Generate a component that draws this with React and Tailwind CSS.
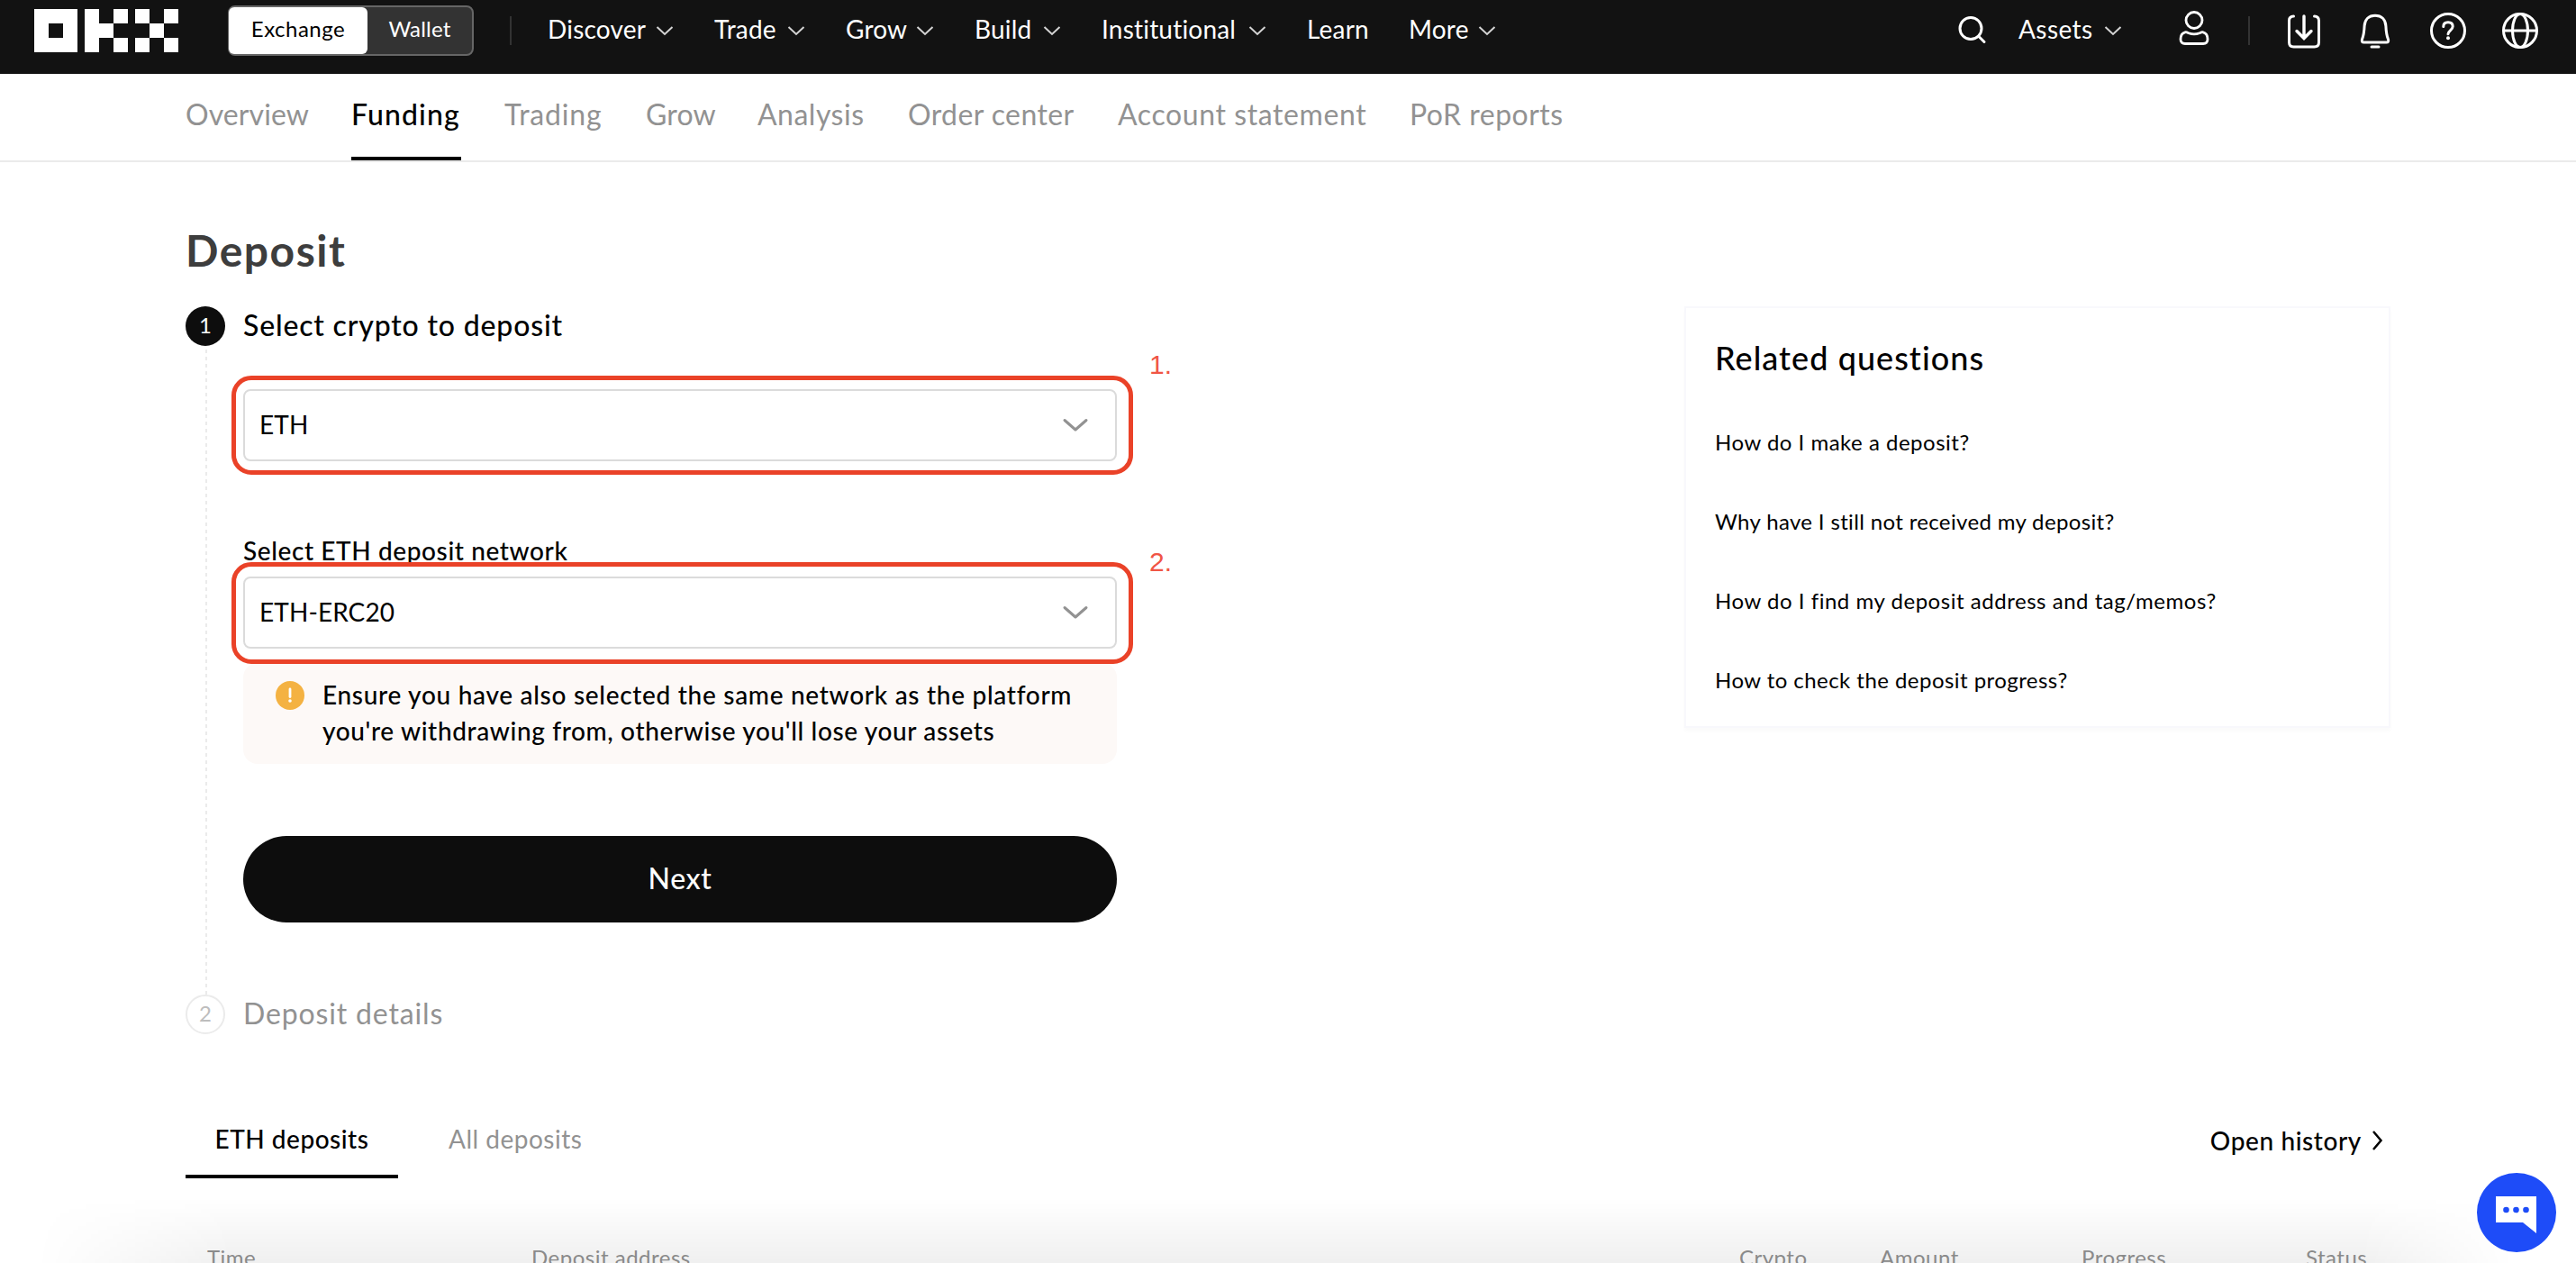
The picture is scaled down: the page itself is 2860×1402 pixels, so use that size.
const NAV_ITEMS = [
  { label: 'Discover', width: 'w-[107px]' },
  { label: 'Trade', width: 'w-[68px]' },
  { label: 'Grow', width: 'w-[65px]' },
  { label: 'Build', width: 'w-[63px]' },
  { label: 'Institutional', width: 'w-[150px]' },
  { label: 'Learn', width: 'w-[68px]', plain: true },
  { label: 'More', width: 'w-[64px]' },
]

const TABS = [
  { label: 'Overview', width: 'w-[136px]', track: 'tracking-[0.1px]' },
  { label: 'Funding', width: 'w-[122px]', track: 'tracking-[1.1px]', active: true },
  { label: 'Trading', width: 'w-[109px]', track: 'tracking-[0.8px]' },
  { label: 'Grow', width: 'w-[76px]', track: 'tracking-[0.2px]' },
  { label: 'Analysis', width: 'w-[119px]', track: 'tracking-[0.5px]' },
  { label: 'Order center', width: 'w-[185px]', track: 'tracking-[0.4px]' },
  { label: 'Account statement', width: 'w-[276px]', track: 'tracking-[0.6px]' },
  { label: 'PoR reports', width: 'w-[172px]', track: 'tracking-[0.5px]' },
]

const QUESTIONS = [
  { text: 'How do I make a deposit?', track: 'tracking-[0.5px]' },
  { text: 'Why have I still not received my deposit?', track: 'tracking-[0.35px]' },
  { text: 'How do I find my deposit address and tag/memos?', track: 'tracking-[0.53px]' },
  { text: 'How to check the deposit progress?', track: 'tracking-[0.45px]' },
]

const COLUMNS = ['Time', 'Deposit address', 'Crypto', 'Amount', 'Progress', 'Status']

function Logo() {
  return (
    <svg className="w-40 h-12 shrink-0" viewBox="0 0 160 48" fill="#fff">
      <path fillRule="evenodd" d="M0 0h48v48H0zM16 16v16h16V16z" />
      <path d="M56 0h16v16h16v16H72v16H56z" />
      <path d="M88 0h16v16H88zM88 32h16v16H88z" />
      <path d="M112 0h16v16h-16zM144 0h16v16h-16zM128 16h16v16h-16zM112 32h16v16h-16zM144 32h16v16h-16z" />
    </svg>
  )
}

function NavChevron() {
  return (
    <svg className="w-5 h-3 shrink-0" viewBox="0 0 20 12" fill="none" stroke="#d4d4d4" strokeWidth="2">
      <path d="M1.5 2 10 10l8.5-8" />
    </svg>
  )
}

function NavDivider() {
  return <div className="w-0.5 h-8 bg-[#333] shrink-0" />
}

function Header() {
  return (
    <header className="h-[82px] bg-[#121212] text-white">
      <div className="h-[68px] pl-[38px] pr-[42px] flex items-center text-[28px] leading-9">
        <Logo />
        <div className="ml-[55px] w-[273px] h-14 flex rounded-lg border-2 border-[#666] bg-[#333] text-2xl tracking-[0.2px] shrink-0">
          <div className="w-[154px] -ml-px rounded-md bg-white text-black flex items-center justify-center pb-1 tracking-[0.5px]">Exchange</div>
          <div className="flex-1 flex items-center justify-center pb-1">Wallet</div>
        </div>
        <div className="ml-10"><NavDivider /></div>
        <nav className="ml-10 flex items-center gap-[45px]">
          {NAV_ITEMS.map(item => (
            <div key={item.label} className="flex items-center gap-[13px]">
              <span className={`pb-1 whitespace-nowrap tracking-[0.2px] ${item.width}`}>{item.label}</span>
              {!item.plain && <NavChevron />}
            </div>
          ))}
        </nav>
        <div className="ml-auto flex items-center">
          <svg className="w-8 h-8 mr-[35px]" viewBox="0 0 32 32" fill="none" stroke="#fff" strokeWidth="3" strokeLinecap="round">
            <circle cx="14" cy="13.5" r="12" />
            <path d="m22.7 22.2 6.3 6.3" />
          </svg>
          <span className="w-[83px] pb-1 tracking-[0.4px]">Assets</span>
          <div className="ml-3 flex"><NavChevron /></div>
          <svg className="w-9 h-10 ml-[62px] mb-1" viewBox="0 0 36 40" fill="none" stroke="#fff" strokeWidth="2.8" strokeLinejoin="round">
            <circle cx="18" cy="10.5" r="9" />
            <path d="M8 23.8c1.5-.4 2.6.3 4 .9 4 1.5 8 1.5 12 0 1.400-.6 2.500-1.300 4-.9 3.800 1 5 4.200 5 7.700 0 3.600-1.800 5-5 5H8c-3.200 0-5-1.400-5-5 0-3.500 1.200-6.700 5-7.700z" />
          </svg>
          <div className="ml-[42px]"><NavDivider /></div>
          <div className="ml-10 flex items-center gap-10">
            <svg className="w-10 h-10" viewBox="0 0 40 40" fill="none" stroke="#fff" strokeWidth="3" strokeLinecap="round">
              <path d="M8.5 4C5 4 3.500 6 3.500 9v24c0 3.500 1.500 5 5 5h23c3.500 0 5-1.500 5-5V9c0-3-1.500-5-5-5" />
              <path d="M20 4v24M12 20.500l8 8 8-8" strokeWidth="3.4" />
            </svg>
            <svg className="w-10 h-10" viewBox="1 0 40 40" fill="none" stroke="#fff" strokeWidth="3" strokeLinecap="round" strokeLinejoin="round">
              <path d="M20 3.300c7 0 11.500 4.200 11.900 11.500.3 7 .6 10 2.600 15 .8 2.500-.2 3.200-2 3.200h-25c-1.800 0-2.800-.7-2-3.200 2-5 2.300-8 2.600-15C8.500 7.500 13 3.300 20 3.300z" />
              <path d="M16 38h8" />
            </svg>
            <svg className="w-10 h-10" viewBox="0 0 40 40" fill="none" stroke="#fff" strokeWidth="3" strokeLinecap="round">
              <circle cx="20" cy="20" r="18.5" />
              <path d="M14.800 15.500c0-3 2-4.700 5.200-4.700s5.200 1.800 5.200 4.500c0 4-5 4.500-5.200 8.500" />
              <circle cx="20" cy="28.3" r="2" fill="#fff" stroke="none" />
            </svg>
            <svg className="w-10 h-10" viewBox="0 0 40 40" fill="none" stroke="#fff" strokeWidth="3">
              <circle cx="20" cy="20" r="18.5" />
              <ellipse cx="20" cy="20" rx="8.5" ry="18.5" />
              <path d="M2 20h36" />
            </svg>
          </div>
        </div>
      </div>
    </header>
  )
}

function SubNav() {
  return (
    <div className="border-b-2 border-[#ebebeb] pl-[206px] flex gap-12 text-[32px]">
      {TABS.map(tab => (
        <div
          key={tab.label}
          className={`h-24 pb-0.5 flex items-center whitespace-nowrap border-b-4 ${tab.width} ${tab.track} ${
            tab.active ? 'border-black text-black font-medium' : 'border-transparent text-[#929292]'
          }`}
        >
          {tab.label}
        </div>
      ))}
    </div>
  )
}

function SelectBox({ value }) {
  return (
    <div className="h-20 pl-4 pr-[29px] flex items-center justify-between border-2 border-[#dbdbdb] rounded-lg text-[28px] tracking-[0.1px]">
      <span className="pb-0.5">{value}</span>
      <svg className="w-[30px] h-4" viewBox="0 0 30 16" fill="none" stroke="#929292" strokeWidth="3" strokeLinecap="round" strokeLinejoin="round">
        <path d="m3 2.5 12 10.5L27 2.5" />
      </svg>
    </div>
  )
}

function DepositSteps() {
  return (
    <div className="w-[1034px] shrink-0">
      <div className="flex gap-5">
        <div className="w-11 flex flex-col">
          <div className="h-11 pb-0.5 rounded-full bg-[#0d0d0d] text-white text-2xl flex items-center justify-center">1</div>
          <div className="mt-1 ml-[22px] w-0.5 flex-1 bg-[repeating-linear-gradient(to_bottom,#ebebeb_0,#ebebeb_4px,transparent_4px,transparent_8px)]" />
        </div>
        <div className="w-[970px] pb-20">
          <h2 className="h-11 pb-0.5 flex items-center text-[32px] font-medium tracking-[0.82px]">Select crypto to deposit</h2>

          <div className="relative mt-12">
            <SelectBox value="ETH" />
            <div className="absolute -top-[15px] -bottom-[15px] -left-[13px] -right-[18px] border-[5px] border-[#ea4228] rounded-[22px]" />
            <span className="absolute left-[1006px] -top-[42px] font-['Liberation_Sans',sans-serif] text-[30px] leading-none text-[#f05545]">1.</span>
          </div>

          <p className="mt-[79px] -mb-px leading-10 text-[28px] font-medium tracking-[0.6px]">Select ETH deposit network</p>
          <div className="relative mt-2.5">
            <SelectBox value="ETH-ERC20" />
            <div className="absolute -top-4 -bottom-[17px] -left-[13px] -right-[18px] border-[5px] border-[#ea4228] rounded-[22px]" />
            <span className="absolute left-[1006px] -top-[31px] font-['Liberation_Sans',sans-serif] text-[30px] leading-none text-[#f05545]">2.</span>
          </div>

          <div className="mt-4 h-28 pl-9 pt-[15px] flex items-start gap-5 rounded-2xl bg-[#fdf9f7]">
            <svg className="w-8 h-8 mt-[5px] shrink-0" viewBox="0 0 32 32">
              <circle cx="16" cy="16" r="16" fill="#f4b242" />
              <path d="M16 9v8.5" stroke="#fff" strokeWidth="2.8" strokeLinecap="round" />
              <circle cx="16" cy="22" r="1.8" fill="#fff" />
            </svg>
            <p className="text-[28px] leading-10 font-medium tracking-[0.7px] whitespace-nowrap">
              Ensure you have also selected the same network as the platform
              <br />
              <span className="tracking-[0.63px]">you're withdrawing from, otherwise you'll lose your assets</span>
            </p>
          </div>

          <button className="mt-20 h-24 w-full pb-0.5 rounded-full bg-[#0d0d0d] text-white text-[32px] font-medium tracking-[0.6px]">Next</button>
        </div>
      </div>
      <div className="h-11 flex items-center gap-5">
        <div className="w-11 h-11 pb-0.5 rounded-full border-2 border-[#ebebeb] text-[#bdbdbd] text-2xl flex items-center justify-center">2</div>
        <div className="pb-0.5 text-[32px] text-[#929292] tracking-[0.85px]">Deposit details</div>
      </div>
    </div>
  )
}

function RelatedQuestions() {
  return (
    <aside className="w-[784px] h-[468px] pl-8 pt-[31px] border-2 border-[#f8f8fc] shadow-[0_4px_4px_rgba(0,0,0,0.02)]">
      <h3 className="text-4xl leading-[48px] font-medium tracking-[1.05px]">Related questions</h3>
      <ul className="mt-[26px] text-2xl">
        {QUESTIONS.map(q => <li key={q.text} className={`h-[88px] flex items-center ${q.track}`}>{q.text}</li>)}
      </ul>
    </aside>
  )
}

function DepositHistory() {
  return (
    <section className="mt-[76px]">
      <div className="flex justify-between text-[28px]">
        <div className="flex gap-6">
          <div className="w-[236px] h-[84px] flex items-center justify-center border-b-4 border-black font-medium tracking-[0.5px]">ETH deposits</div>
          <div className="h-[84px] px-8 flex items-center border-b-4 border-transparent text-[#929292] tracking-[0.5px]">All deposits</div>
        </div>
        <div className="h-[84px] pr-[7px] flex items-center gap-[11px] font-medium tracking-[0.6px]">
          Open history
          <svg className="w-3.5 h-6" viewBox="0 0 14 24" fill="none" stroke="#000" strokeWidth="2.5">
            <path d="m2 2 8.5 10L2 22" />
          </svg>
        </div>
      </div>
      <div className="mt-[70px] pl-6 grid grid-cols-[360px_1341px_156px_224px_249px_auto] text-2xl leading-9 text-[#929292] tracking-[0.5px]">
        {COLUMNS.map(c => <span key={c}>{c}</span>)}
      </div>
    </section>
  )
}

export default function App() {
  return (
    <div className="relative h-[1402px] overflow-hidden bg-white text-black font-[Lato,sans-serif]">
      <Header />
      <SubNav />
      <main className="px-[206px] pt-[68px]">
        <h1 className="text-5xl leading-[60px] font-bold text-[#3d3d3d] tracking-[1.5px]">Deposit</h1>
        <div className="mt-8 flex items-start justify-between">
          <DepositSteps />
          <RelatedQuestions />
        </div>
        <DepositHistory />
      </main>

      {/* shadow of the panel below the fold */}
      <div className="absolute inset-x-0 bottom-0 h-[72px] pointer-events-none bg-linear-to-b from-transparent to-black/[0.06] [mask-image:linear-gradient(to_right,transparent_40px,black_260px,black_2620px,transparent_2790px)]" />

      <button className="absolute right-[22px] bottom-3 w-[88px] h-[88px] rounded-full bg-[#1e4cf8]">
        <svg className="w-full h-full" viewBox="0 0 88 88">
          <path d="M21 26h45v41L51 55H21z" fill="#fff" />
          <g fill="#1e4cf8">
            <circle cx="32.5" cy="41" r="3.3" />
            <circle cx="43.5" cy="41" r="3.3" />
            <circle cx="54.5" cy="41" r="3.3" />
          </g>
        </svg>
      </button>
    </div>
  )
}
